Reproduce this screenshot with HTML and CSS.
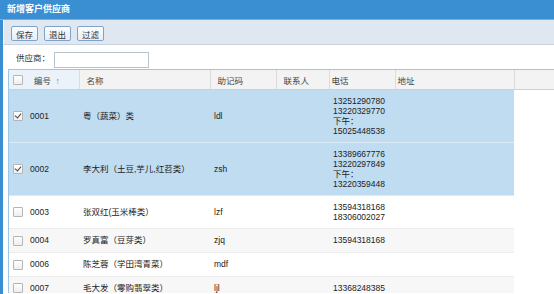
FILE: index.html
```html
<!DOCTYPE html>
<html lang="zh-CN">
<head>
    <meta charset="UTF-8">
    <title>新增客户供应商</title>
    <link rel="stylesheet" href="styles.css">
</head>
<body>
    <div class="win">
        <div class="win-title">新增客户供应商</div>
        <div class="win-body">
            <!-- toolbar -->
            <div class="toolbar">
                <button type="button" class="btn">保存</button>
                <button type="button" class="btn">退出</button>
                <button type="button" class="btn">过滤</button>
            </div>

            <!-- search -->
            <div class="search">
                <label for="supplier">供应商：</label>
                <input type="text" id="supplier">
            </div>

            <!-- grid -->
            <div class="grid">
                <div class="grid-head">
                    <table>
                        <colgroup>
                            <col class="c-ck"><col class="c-no"><col class="c-name"><col class="c-code">
                            <col class="c-man"><col class="c-tel"><col class="c-addr">
                        </colgroup>
                        <tr>
                            <th class="ck sorted"><span class="box"></span></th>
                            <th class="sorted">编号 <span class="arrow">↑</span></th>
                            <th>名称</th>
                            <th>助记码</th>
                            <th>联系人</th>
                            <th class="tight">电话</th>
                            <th class="tight">地址</th>
                        </tr>
                    </table>
                </div>
                <div class="grid-body">
                    <table>
                        <colgroup>
                            <col class="c-ck"><col class="c-no"><col class="c-name"><col class="c-code">
                            <col class="c-man"><col class="c-tel"><col class="c-addr">
                        </colgroup>
                        <tr class="sel">
                            <td class="ck"><span class="box on"></span></td>
                            <td class="no">0001</td>
                            <td>粤（蔬菜）类</td>
                            <td>ldl</td>
                            <td></td>
                            <td>13251290780<br>13220329770<br>下午：<br>15025448538</td>
                            <td></td>
                        </tr>
                        <tr class="sel">
                            <td class="ck"><span class="box on"></span></td>
                            <td class="no">0002</td>
                            <td>李大利（土豆,芋儿,红苕类）</td>
                            <td>zsh</td>
                            <td></td>
                            <td>13389667776<br>13220297849<br>下午：<br>13220359448</td>
                            <td></td>
                        </tr>
                        <tr>
                            <td class="ck"><span class="box"></span></td>
                            <td class="no">0003</td>
                            <td>张双红(玉米棒类）</td>
                            <td>lzf</td>
                            <td></td>
                            <td>13594318168<br>18306002027</td>
                            <td></td>
                        </tr>
                        <tr class="alt">
                            <td class="ck"><span class="box"></span></td>
                            <td class="no">0004</td>
                            <td>罗真富（豆芽类）</td>
                            <td>zjq</td>
                            <td></td>
                            <td>13594318168</td>
                            <td></td>
                        </tr>
                        <tr>
                            <td class="ck"><span class="box"></span></td>
                            <td class="no">0006</td>
                            <td>陈芝蓉（学田湾青菜）</td>
                            <td>mdf</td>
                            <td></td>
                            <td></td>
                            <td></td>
                        </tr>
                        <tr class="alt">
                            <td class="ck"><span class="box"></span></td>
                            <td class="no">0007</td>
                            <td>毛大发（零购翡翠类）</td>
                            <td>ljl</td>
                            <td></td>
                            <td>13368248385</td>
                            <td></td>
                        </tr>
                    </table>
                </div>
            </div>
        </div>
    </div>
</body>
</html>
```

FILE: styles.css
```css
body {
    margin: 0;
    font-family: "Liberation Sans", "Noto Sans CJK SC", sans-serif;
    font-size: 8.5px;
    color: #222;
    background: #fff;
    overflow: hidden;
}
.win {
    width: 554px;
    height: 294px;
    overflow: hidden;
}
.win-title {
    height: 19px;
    line-height: 19px;
    padding-left: 7px;
    background: #3a8fd3;
    border-bottom: 1px solid #74afe0;
    color: #fff;
    font-size: 9px;
    font-weight: bold;
}
.win-body {
    border-left: 3px solid #3a8fd3;
    height: 274px;
    overflow: hidden;
}
.win-body > * {
    border-left: 1px solid #fff;
}
.toolbar {
    display: flex;
    gap: 6px;
    height: 25px;
    box-sizing: border-box;
    padding: 6px 7px 0;
    background: #dfe8f1;
    border-bottom: 1px solid #c9d2db;
}
.btn {
    width: 27px;
    height: 15px;
    padding: 0;
    font-family: inherit;
    font-size: 8.5px;
    color: #333;
    border: 1px solid #7fa4cc;
    border-radius: 2px;
    background: linear-gradient(#fbfcfe, #e7eef6);
}
.search {
    display: flex;
    align-items: center;
    gap: 4px;
    height: 24px;
    padding-left: 12px;
    color: #333;
}
.search input {
    width: 95px;
    height: 16px;
    box-sizing: border-box;
    border: 1px solid #b9c3cc;
    margin-top: 5px;
}
.grid {
    padding-left: 4px;
}
.grid table {
    border-collapse: collapse;
    table-layout: fixed;
    width: 505px;
}
.c-ck { width: 18px; }
.c-no { width: 52px; }
.c-name { width: 131px; }
.c-code { width: 66px; }
.c-man { width: 53px; }
.c-tel { width: 66px; }
.c-addr { width: 119px; }
.grid-head {
    border-top: 1px solid #9dc5e7;
    border-left: 1px solid #9dc5e7;
    border-bottom: 1px solid #cfcfcf;
    background: #f3f3f3;
}
.grid-head th {
    height: 19px;
    padding: 0 0 0 7px;
    text-align: left;
    font-weight: normal;
    color: #444;
    border-right: 1px solid #dcdcdc;
}
.grid-head th.tight {
    padding-left: 2px;
}
.grid-head th.sorted {
    background: #ebf2f9;
}
.grid-head th.ck {
    text-align: center;
    border-right: none;
}
.arrow {
    color: #888;
    margin-left: 2px;
}
.grid-body {
    border-left: 1px solid #9dc5e7;
    height: 203px;
    overflow: hidden;
}
.grid-body td {
    padding: 6px 4px;
    line-height: 10px;
    vertical-align: middle;
    border-bottom: 1px solid #ececec;
    white-space: nowrap;
    overflow: hidden;
}
.grid-body td.no {
    padding-left: 3px;
}
.ck {
    text-align: center;
    padding-left: 0 !important;
    padding-right: 0 !important;
}
.box {
    display: inline-block;
    width: 8px;
    height: 8px;
    border: 1px solid #b5b5b5;
    border-radius: 1px;
    background: linear-gradient(#fff, #eee);
    vertical-align: middle;
    position: relative;
}
.box.on::after {
    content: "";
    position: absolute;
    left: 2px;
    top: 0;
    width: 3px;
    height: 5px;
    border: solid #444;
    border-width: 0 1px 1px 0;
    transform: rotate(40deg);
}
.grid-body tr.sel td {
    background: #c0dcf1;
    border-bottom-color: #dbeaf6;
}
.grid-body tr.alt td {
    background: #f7f7f7;
}
```
